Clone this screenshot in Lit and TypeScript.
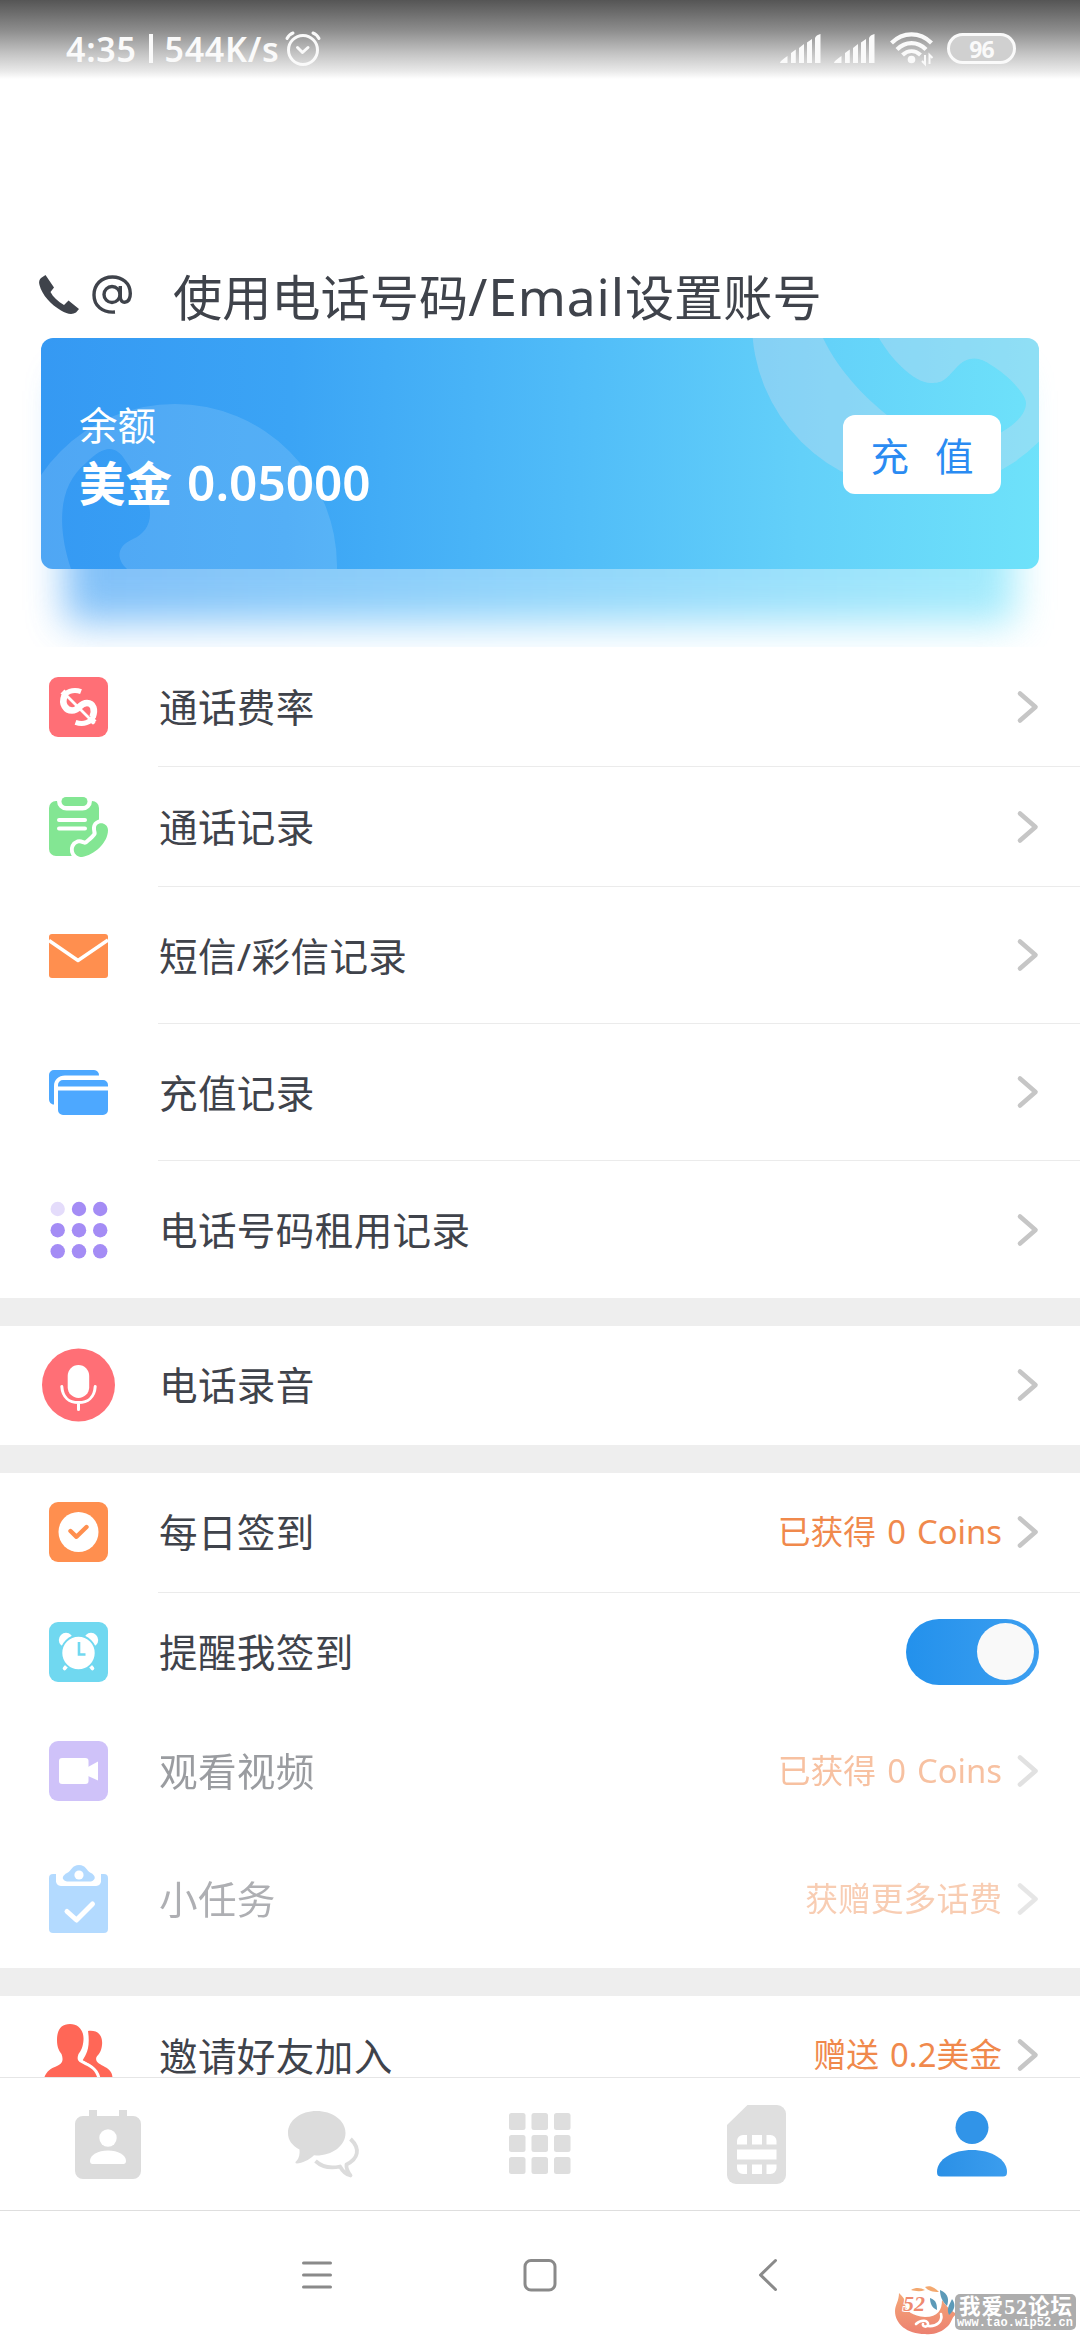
import { LitElement, html, css, nothing, TemplateResult } from "lit";
import { customElement } from "lit/decorators.js";
import { classMap } from "lit/directives/class-map.js";

interface Row {
  icon: TemplateResult;
  label: string;
  size: "short" | "tall" | "mid";
  value?: string;
  toggle?: boolean;
  faded?: "half" | "more";
  divider?: boolean;
}

const rateIcon = html`<svg width="59" height="60" viewBox="0 0 59 60">
  <rect width="59" height="60" rx="9" fill="#ff6f76" />
  <g fill="none" stroke="#fff">
    <path stroke-width="5" d="M32 14.600C24 11.500 16 15 14 21" />
    <path stroke-width="6.600" d="M15.500 19C12 27 17 33.500 23 33.500C31 33.500 30 26 38 26C44.500 26 46.500 33 43.500 40" />
    <path stroke-width="5" d="M45 38C42 46 34 48 26.500 45.300" />
    <path stroke-width="2.800" d="M13.500 14.500L45.500 46.500M12.500 17.500L16.500 13.500M42.500 46.500L46.500 42.500" />
  </g>
</svg>`;

const callLogIcon = html`<svg width="59" height="60" viewBox="0 0 59 60">
  <rect y="4" width="50" height="55" rx="7" fill="#83e693" />
  <rect x="12.500" y="-1" width="26" height="10" rx="5" fill="#83e693" stroke="#fff" stroke-width="9" />
  <rect x="12.500" y="0" width="26" height="9" rx="4.500" fill="#83e693" />
  <path d="M10 23h26M10 31.500h26" stroke="#fff" stroke-width="4" stroke-linecap="round" />
  <path d="M47 31C47 24.500 58.500 24.500 59 33C59 46 45 58 33 60C24 60 22 49 29 46.500C33 45.500 34 49 38 47C41 44.500 44 42 46.500 39C49 36 46.500 34 47 31Z" fill="#83e693" stroke="#fff" stroke-width="8" paint-order="stroke" />
</svg>`;

const mailIcon = html`<svg width="59" height="44" viewBox="0 0 59 44">
  <rect width="59" height="44" rx="3" fill="#ff8f4f" />
  <path d="M0 6.500L29 26.500L59 6" fill="none" stroke="#fff" stroke-width="3.400" stroke-linejoin="round" />
</svg>`;

const cardsIcon = html`<svg width="59" height="45" viewBox="0 0 59 45">
  <path d="M5 0H45a5 5 0 0 1 5 5.500H16C9.500 5.500 5 10 5 16V34.500C2 34.500 0 32 0 29V5a5 5 0 0 1 5-5z" fill="#4da8ff" />
  <path d="M9 16.500V15a5 5 0 0 1 5-5H54a5 5 0 0 1 5 5v1.500zM9 20.500H59V40a5 5 0 0 1-5 5H14a5 5 0 0 1-5-5z" fill="#4da8ff" />
</svg>`;

const dotsIcon = html`<svg width="59" height="58" viewBox="0 0 59 58">
  <g fill="#a48cf5">
    <circle cx="8.700" cy="8" r="7.200" fill="#e4dcfb" />
    <circle cx="30" cy="8" r="7.200" /><circle cx="51.200" cy="8" r="7.200" />
    <circle cx="8.700" cy="29.200" r="7.200" /><circle cx="30" cy="29.200" r="7.200" /><circle cx="51.200" cy="29.200" r="7.200" />
    <circle cx="8.700" cy="50.300" r="7.200" /><circle cx="30" cy="50.300" r="7.200" /><circle cx="51.200" cy="50.300" r="7.200" />
  </g>
</svg>`;

const micIcon = html`<svg width="74" height="74" viewBox="0 0 74 74">
  <circle cx="37.500" cy="37" r="36.500" fill="#ff6f76" />
  <rect x="26.700" y="17" width="21.500" height="33" rx="10.700" fill="#fff" />
  <path d="M20.800 38.500C21.500 49.500 28.500 54.600 37.500 54.600S53.500 49.500 54.200 38.500M37.500 54.500V61.500" fill="none" stroke="#fff" stroke-width="3" stroke-linecap="round" />
</svg>`;

const checkInIcon = html`<svg width="59" height="60" viewBox="0 0 59 60">
  <rect width="59" height="60" rx="9" fill="#ff8f4f" />
  <circle cx="29.500" cy="30" r="20" fill="#fff" />
  <path d="M21.500 29L27.500 34.800L37.500 25" fill="none" stroke="#ff8f4f" stroke-width="4.400" stroke-linecap="round" stroke-linejoin="round" />
</svg>`;

const alarmIcon = html`<svg width="59" height="60" viewBox="0 0 59 60">
  <rect width="59" height="60" rx="9" fill="#70d8f0" />
  <g fill="#fff">
    <circle cx="17" cy="18" r="7.200" /><circle cx="42" cy="18" r="7.200" />
    <path d="M15.500 46.500L21 40M43.500 46.500L38 40" stroke="#fff" stroke-width="3.600" stroke-linecap="round" />
    <circle cx="29.500" cy="31" r="17.200" stroke="#70d8f0" stroke-width="2" />
  </g>
  <path d="M30 20V32.500H36.500" fill="none" stroke="#70d8f0" stroke-width="2.600" />
</svg>`;

const videoIcon = html`<svg width="59" height="60" viewBox="0 0 59 60">
  <rect width="59" height="60" rx="9" fill="#a48cf5" />
  <rect x="10" y="17" width="29.500" height="26" rx="3" fill="#fff" />
  <path d="M39 26L49 20.500V39.500L39 35Z" fill="#fff" />
</svg>`;

const taskIcon = html`<svg width="59" height="68" viewBox="0 0 59 68">
  <path d="M4 9h3v6a5 5 0 0 0 5 6H47a5 5 0 0 0 5-6V9h3a4 4 0 0 1 4 4V64a4 4 0 0 1-4 4H4a4 4 0 0 1-4-4V13a4 4 0 0 1 4-4z" fill="#4da8ff" />
  <path d="M18 16.500C11 14.500 14 10 18 8C23 5.500 23 0 30 0S37 5.500 42 8C46 10 48 14.500 42 16.500Z" fill="#4da8ff" />
  <circle cx="30" cy="10" r="4.600" fill="#fff" />
  <path d="M18 46.500L27.500 55L43.500 39" fill="none" stroke="#fff" stroke-width="5" stroke-linecap="round" stroke-linejoin="round" />
</svg>`;

const peopleIcon = html`<svg width="70" height="62" viewBox="0 0 70 62">
  <path d="M45 7C56 5.500 60 13 59 21C58.500 27 56 30 53.500 33C51.500 38 57 40 62 43C68 46 69.500 50 69.500 54L69 62H58C58 50 52 42 39.500 36.500C41 33 48 27 45 7Z" fill="#ff6757" />
  <path d="M27 0C36 0 41 7 40.500 16C40 23 38 27 35.500 30C33 37 36 38 42 41C51 45 55 50 55.500 62H0C0 50 6 45 13 42.500C19 40 21 37 18.500 30C16 27 14 23 14 16C14 6 18 0 27 0Z" fill="#ff6757" stroke="#fff" stroke-width="6" paint-order="stroke" />
</svg>`;

const chevron = html`<svg class="chevron" width="22" height="34" viewBox="0 0 22 34">
  <path d="M3 3.500L18.500 17L3 30.500" fill="none" stroke="#c6c6c6" stroke-width="4.600" stroke-linecap="round" stroke-linejoin="round" />
</svg>`;

const signal = html`<svg width="41" height="30" viewBox="0 0 41 30" fill="#fafafa">
  <path d="M0 29Q0 27 7.500 22V29ZM11 19L15.800 15.500V29H11ZM19 14L24 10V29H19ZM27 8.500L32 5V29H27ZM35 4Q36 1 40.500 0V29H35Z" />
</svg>`;

const groups: Row[][] = [
  [
    { icon: rateIcon, label: "通话费率", size: "short", divider: true },
    { icon: callLogIcon, label: "通话记录", size: "short", divider: true },
    { icon: mailIcon, label: "短信/彩信记录", size: "tall", divider: true },
    { icon: cardsIcon, label: "充值记录", size: "tall", divider: true },
    { icon: dotsIcon, label: "电话号码租用记录", size: "tall" },
  ],
  [{ icon: micIcon, label: "电话录音", size: "mid" }],
  [
    { icon: checkInIcon, label: "每日签到", size: "short", value: "已获得 0 Coins", divider: true },
    { icon: alarmIcon, label: "提醒我签到", size: "mid", toggle: true },
    { icon: videoIcon, label: "观看视频", size: "mid", value: "已获得 0 Coins", faded: "half" },
    { icon: taskIcon, label: "小任务", size: "tall", value: "获赠更多话费", faded: "more" },
  ],
  [{ icon: peopleIcon, label: "邀请好友加入", size: "short", value: "赠送 0.2美金" }],
];

@customElement("app-root")
export class AppRoot extends LitElement {
  static styles = css`
    :host {
      display: flex;
      flex-direction: column;
      position: relative;
      width: 1080px;
      height: 2340px;
      overflow: hidden;
      background: #fff;
      color: #3f434b;
      font-family: "Noto Sans", "Noto Sans CJK SC", sans-serif;
    }
    * { box-sizing: border-box; }
    svg { display: block; flex: none; overflow: visible; }

    .status {
      display: flex;
      flex: none;
      align-items: center;
      height: 79px;
      padding: 18px 64px 0 66px;
      background: linear-gradient(#555, #8c8c8c 38%, #c4c4c4 68%, #e9e9e9 90%, #fff);
      color: #fafafa;
      font-size: 34px;
      font-weight: 600;
      white-space: pre;
    }
    .clock { display: flex; align-items: center; gap: 12px; letter-spacing: 0.700px; }
    .bar { width: 4px; height: 29px; background: #fafafa; }
    .status .alarm { margin: 1px auto 0 6px; }
    .status .signal { margin-right: 13px; }
    .status .wifi { margin: 0 14px 0 2px; }
    .battery {
      display: flex;
      align-items: center;
      justify-content: center;
      width: 69px;
      height: 31px;
      border: 3.500px solid #fafafa;
      border-radius: 16px;
      background: #d0d0d0;
      font-size: 23px;
      font-weight: 700;
      letter-spacing: -1px;
    }

    .account {
      display: flex;
      flex: none;
      align-items: flex-end;
      height: 259px;
      padding: 0 0 4px 39px;
      font-size: 49.200px;
    }
    .account svg { margin-bottom: 19px; }
    .account .title { margin-left: 40px; line-height: 74px; white-space: nowrap; }
    .account .latin { font-size: 51.500px; letter-spacing: 0.900px; line-height: 1; }

    .card-area {
      flex: none;
      height: 309px;
      padding: 0 41px;
      clip-path: inset(0);
    }
    .card {
      position: relative;
      display: flex;
      align-items: center;
      justify-content: space-between;
      height: 231px;
      padding: 3px 38px 0 38px;
      color: #fff;
    }
    .card .shadow {
      position: absolute;
      inset: 40px 24px -54px;
      background: linear-gradient(90deg, #3599f4, #50bcf8 50%, #6ce0fa);
      filter: blur(19px);
      opacity: 0.620;
    }
    .card .face {
      position: absolute;
      inset: 0;
      border-radius: 12px;
      overflow: hidden;
      background: linear-gradient(92deg, #3599f3, #3ba4f5 25%, #50bcf8 53%, #63d0f9 76%, #6ee2fa);
    }
    .balance, .recharge { position: relative; }
    .balance .caption { font-size: 38.500px; line-height: 54px; }
    .balance .amount { font-size: 46.500px; line-height: 60px; font-weight: 600; white-space: pre; }
    .balance .digits { font-size: 49.500px; margin-left: 3px; }
    .recharge {
      display: flex;
      align-items: center;
      justify-content: center;
      width: 158px;
      height: 79px;
      margin-top: -1px;
      padding-bottom: 1px;
      border-radius: 12px;
      background: #fff;
      color: #2a8bf2;
      font-size: 38.500px;
      gap: 26px;
    }

    .menu { flex: 1; min-height: 0; overflow: hidden; }
    .group + .group { border-top: 28px solid #eee; }
    .group + .group .icon, .group + .group .body { padding-bottom: 2px; }
    .row { display: flex; height: 119px; }
    .row.short { height: 120px; }
    .row.tall { height: 137px; }
    .row .icon {
      display: flex;
      flex: none;
      align-items: center;
      justify-content: center;
      width: 158px;
      padding-right: 2px;
    }
    .row .body {
      display: flex;
      flex: 1;
      align-items: center;
      padding-right: 41px;
      font-size: 38.600px;
      line-height: 36px;
      letter-spacing: 0.350px;
    }
    .row.divider .body { border-bottom: 1.500px solid #ebebeb; }
    .row .label { flex: 1; padding: 1px 0 0 1px; }
    .row .value { color: #f0894c; font-size: 32.800px; letter-spacing: 0; word-spacing: 2.500px; margin-right: 15px; }
    .row.half { opacity: 0.520; }
    .row.more { opacity: 0.420; }
    .toggle {
      display: flex;
      justify-content: flex-end;
      align-items: center;
      width: 133px;
      height: 66px;
      padding-right: 5px;
      border-radius: 33px;
      background: linear-gradient(90deg, #2391ec, #3d9ff0);
    }
    .knob { width: 57px; height: 57px; border-radius: 50%; background: #f9f9f9; }

    .tabs {
      display: grid;
      grid-template-columns: repeat(5, 1fr);
      flex: none;
      align-items: center;
      justify-items: center;
      height: 134px;
      border-top: 1px solid #e6e6e6;
      border-bottom: 1px solid #dedede;
    }
    .system {
      display: flex;
      flex: none;
      align-items: center;
      justify-content: center;
      height: 129px;
      padding-bottom: 1px;
    }
    .watermark { position: absolute; right: 4px; bottom: 5px; display: flex; align-items: center; }
  `;

  private renderRow(row: Row) {
    const classes = {
      row: true,
      [row.size]: true,
      divider: !!row.divider,
      half: row.faded === "half",
      more: row.faded === "more",
    };
    return html`<div class=${classMap(classes)}>
      <div class="icon">${row.icon}</div>
      <div class="body">
        <span class="label">${row.label}</span>
        ${row.value ? html`<span class="value">${row.value}</span>` : nothing}
        ${row.toggle ? html`<div class="toggle"><div class="knob"></div></div>` : chevron}
      </div>
    </div>`;
  }

  render() {
    return html`
      <div class="status">
        <div class="clock"><span>4:35</span><i class="bar"></i><span>544K/s</span></div>
        <svg class="alarm" width="36" height="36" viewBox="0 0 36 36" fill="none" stroke="#fafafa" stroke-width="3" stroke-linecap="round">
          <circle cx="18" cy="19" r="14.500" />
          <path d="M2 7.500Q4 3.500 8 2M34 7.500Q32 3.500 28 2M12.500 16.500L17.500 21.500L23 16.500" stroke-linejoin="round" />
        </svg>
        <div class="signal">${signal}</div>
        <div class="signal">${signal}</div>
        <svg class="wifi" width="43" height="33" viewBox="0 0 43 33" fill="none" stroke="#fafafa" stroke-width="4.200">
          <path d="M1.500 11C13 -0.500 30 -0.500 41.500 11M7 17.500C15.500 9 27.500 9 36 17.500M12.500 23C18 18 25 18 30.500 23" />
          <circle cx="21.500" cy="27.500" r="3.800" fill="#fafafa" stroke="none" />
          <path d="M35 23V32L32 29M39.500 32V23L42.500 26" stroke-width="2" />
        </svg>
        <div class="battery">96</div>
      </div>

      <div class="account">
        <svg width="94" height="40" viewBox="0 0 94 40">
          <path d="M2 3L6.500 0L15 12.500L11.500 17C14 22 19 26.500 25 30L29.500 25.500L40 34L37 37.500C33 40 28 39 22 35.500C12 29.500 3 20 0.500 10C-0.500 6.500 0.500 4.500 2 3Z" fill="#3f434b" />
          <g fill="none" stroke="#3f434b" stroke-width="3.400">
            <circle cx="73" cy="19.500" r="8" />
            <path d="M81.300 11V22C81.300 30 91.300 29 91.300 18.500C91.300 8 83 2 73.500 2C62 2 55 10 55 20C55 30.500 63 38 76 37" />
          </g>
        </svg>
        <div class="title">使用电话号码<span class="latin">/Email</span>设置账号</div>
      </div>

      <div class="card-area">
        <div class="card">
          <div class="shadow"></div>
          <div class="face">
            <svg width="998" height="231" viewBox="0 0 998 231" fill-rule="evenodd">
              <path fill="#fff" fill-opacity="0.130" d="M-28 228a162 162 0 1 0 324 0a162 162 0 1 0 -324 0ZM30 231C18 195 14 150 45 125C62 108 74 106 84 122C95 138 100 150 108 168C112 184 104 196 92 201C74 209 76 222 86 231V240H30Z" />
              <path fill="#d4dcee" fill-opacity="0.330" d="M711 -15a168 168 0 1 0 336 0a168 168 0 1 0 -336 0ZM782 0C799 35 825 60 846 77C890 120 930 115 964 92C975 85 985 76 985 65C985 55 964 35 950 27C938 18 926 18 915 30C904 42 902 45 890 45C872 45 848 18 838 0Z" />
            </svg>
          </div>
          <div class="balance">
            <div class="caption">余额</div>
            <div class="amount">美金 <span class="digits">0.05000</span></div>
          </div>
          <div class="recharge"><span>充</span><span>值</span></div>
        </div>
      </div>

      <div class="menu">
        ${groups.map((group) => html`<div class="group">${group.map((row) => this.renderRow(row))}</div>`)}
      </div>

      <div class="tabs">
        <svg width="66" height="69" viewBox="0 0 66 69">
          <path d="M8 6H14V0H22V6H44V0H52V6H58a8 8 0 0 1 8 8V61a8 8 0 0 1-8 8H8a8 8 0 0 1-8-8V14a8 8 0 0 1 8-8Z" fill="#dcdcdc" />
          <circle cx="33" cy="28" r="8.700" fill="#fff" />
          <path d="M15 51C15 45 23 40.500 33 40.500S51 45 51 51C51 53 50 54 48.500 54H17.500C16 54 15 53 15 51Z" fill="#fff" />
        </svg>
        <svg width="72" height="66" viewBox="0 0 72 66">
          <path d="M28.500 0C44 0 57.500 9 57.500 22S44 44.500 28.500 44.500L26 44.300C21 49 14 52.500 9 52.500C7 52.500 7 51 8.500 50C11 47.500 12 43 11.500 38.500C4 34.500 0 29 0 22C0 9 13 0 28.500 0Z" fill="#dcdcdc" />
          <path d="M62.500 28C73 38 70 48 58.500 53.500C58 57 59.500 60.500 62.500 64.500C58 63.500 54.500 60 52 55.500C43 57.500 34 56 27.500 50" fill="none" stroke="#dcdcdc" stroke-width="3.800" stroke-linejoin="round" />
        </svg>
        <svg width="62" height="62" viewBox="0 0 62 62" fill="#dedede">
          ${[0, 1, 2].map((r) => [0, 1, 2].map((c) => html`<svg x=${c * 22.5} y=${r * 22}><rect width="16.500" height="17" rx="2.500" /></svg>`))}
        </svg>
        <svg width="59" height="79" viewBox="0 0 59 79">
          <path d="M20.500 0H50a9 9 0 0 1 9 9V70a9 9 0 0 1-9 9H9a9 9 0 0 1-9-9V20Z" fill="#dfdfdf" />
          <path d="M16 30H20V39.500H10V36A6 6 0 0 1 16 30ZM25 30H35V39.500H25ZM39.500 30H43.500A6 6 0 0 1 49.500 36V39.500H39.500ZM10 44.500H49.500V54.500H10ZM10 59.500H20V69H16A6 6 0 0 1 10 63ZM25 59.500H35V69H25ZM39.500 59.500H49.500V63A6 6 0 0 1 43.500 69H39.500Z" fill="#fff" />
        </svg>
        <svg width="70" height="66" viewBox="0 0 70 66">
          <defs><linearGradient id="me" x1="0" x2="1"><stop offset="0" stop-color="#2b90e6" /><stop offset="1" stop-color="#3b9dee" /></linearGradient></defs>
          <circle cx="35" cy="16.500" r="16.500" fill="#3194e8" />
          <path d="M0 61C0 48 16 39 35 39S70 48 70 61C70 64 69 65.500 66 65.500H4C1 65.500 0 64 0 61Z" fill="url(#me)" />
        </svg>
      </div>

      <div class="system">
        <svg width="474" height="34" viewBox="0 0 474 34" fill="none" stroke="#8a8a8a" stroke-width="3" stroke-linecap="round">
          <path d="M0.500 5H27.500M0.500 17H27.500M0.500 29H27.500" />
          <rect x="222" y="2.500" width="30" height="29.500" rx="6" />
          <path d="M472.500 2.500L457.500 17L472.500 31.500" stroke-linejoin="round" />
        </svg>
      </div>

      <div class="watermark">
        <svg width="181" height="49" viewBox="0 0 181 49">
          <defs><linearGradient id="fl" x1="0" y1="0" x2="0" y2="1"><stop offset="0" stop-color="#f5a878" /><stop offset="1" stop-color="#ec8170" /></linearGradient></defs>
          <path d="M4 7C8 11 10 13 10 17C10 25 18 30 30 31C43 31 47 24 47 14C50 18 53 23 62 28C57 30 57 36 53 40C47 46 39 49 30 48C12 48 0 38 0 25C0 19 4 15 4 7Z" fill="url(#fl)" />
          <path d="M16 4C21 1 26 2 30 4C25 6 20 5 16 4ZM30 1C36 -1 40 2 44 6C38 6 33 5 30 1Z" fill="#f3a86f" />
          <path d="M35 12C42 14 42 20 42 24C37 22 35 17 35 12ZM45 4C54 8 54 14 52 20C47 15 45 10 45 4ZM57 13C61 18 60 24 54 29C51 22 55 18 57 13Z" fill="#5c9ab8" />
          <path d="M21 38C26 33 34 34 33 39C31 42 27 40 28 38M33 40C42 41 48 35 46 28" fill="none" stroke="#fff" stroke-width="2.600" stroke-linecap="round" />
          <text x="8" y="25" font-family="Liberation Serif, serif" font-size="22" font-weight="700" font-style="italic" fill="#ee8a70" stroke="#fff" stroke-width="2" paint-order="stroke">52</text>
          <rect x="60" y="8" width="121" height="36" rx="5" fill="#adadad" />
          <g fill="#fff" font-weight="700">
            <text x="64" y="28" textLength="113" font-size="21.500" font-family="Liberation Serif, Noto Sans CJK SC, serif">我爱52论坛</text>
            <text x="62" y="40" textLength="116" font-size="12" font-family="Liberation Mono, monospace">www.tao.wip52.cn</text>
          </g>
        </svg>
      </div>
    `;
  }
}
